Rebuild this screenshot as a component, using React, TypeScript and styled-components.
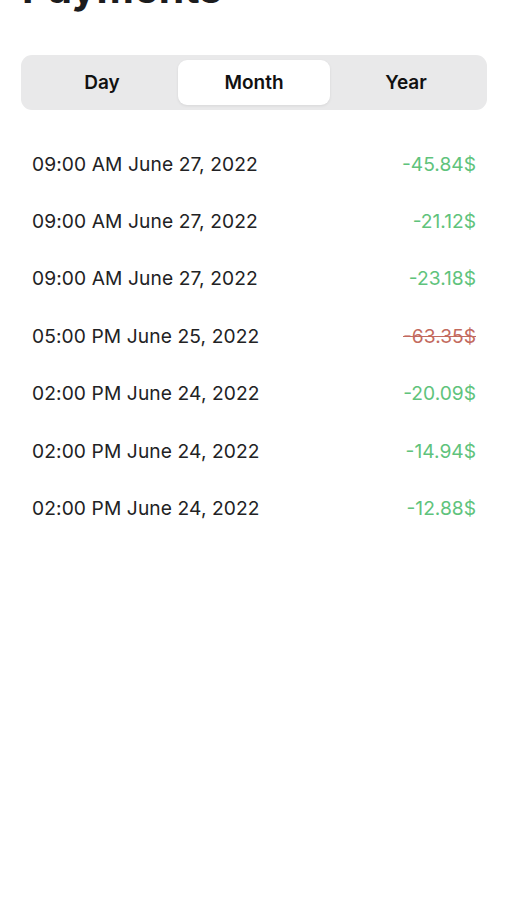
import * as React from 'react';
import styled, { createGlobalStyle, css } from 'styled-components';

const GlobalStyle = createGlobalStyle`
  html, body {
    margin: 0;
    padding: 0;
    background: #ffffff;
    font-family: Inter, 'Noto Sans', 'Liberation Sans', sans-serif;
    color: #1c1c1e;
  }
`;

const Screen = styled.div`
  width: 507px;
  height: 900px;
  overflow: hidden;
  padding: 0 20px 0 21px;
  box-sizing: border-box;
`;

const Title = styled.h1`
  margin: -37px 0 0 1px;
  font-size: 41px;
  line-height: 50px;
  font-weight: 700;
  letter-spacing: 0.2px;
`;

const Segmented = styled.div`
  margin-top: 42px;
  height: 55px;
  padding: 5px;
  box-sizing: border-box;
  display: grid;
  grid-template-columns: repeat(3, 1fr);
  background: #e9e9ea;
  border-radius: 11px;
`;

const Segment = styled.div<{ active?: boolean }>`
  display: flex;
  align-items: center;
  justify-content: center;
  padding-bottom: 1px;
  font-size: 19px;
  font-weight: 600;
  color: #111;
  border-radius: 9px;
  ${({ active }) =>
    active &&
    css`
      background: #ffffff;
      box-shadow: 0 1px 3px rgba(0, 0, 0, 0.08);
    `};
`;

const List = styled.div`
  margin-top: 25px;
  padding: 0 11px;
  display: flex;
  flex-direction: column;
`;

const Row = styled.div`
  height: 57.4px;
  display: flex;
  align-items: center;
  justify-content: space-between;
  font-size: 19.2px;
`;

const DateText = styled.span`
  color: #222224;
  letter-spacing: 0.1px;
`;

const Amount = styled.span<{ cancelled?: boolean }>`
  color: #5fc37c;
  ${({ cancelled }) =>
    cancelled &&
    css`
      color: #c36a5e;
      text-decoration: line-through;
    `};
`;

interface Payment {
  date: string;
  amount: string;
  cancelled?: boolean;
}

const payments: Payment[] = [
  { date: '09:00 AM June 27, 2022', amount: '-45.84$' },
  { date: '09:00 AM June 27, 2022', amount: '-21.12$' },
  { date: '09:00 AM June 27, 2022', amount: '-23.18$' },
  { date: '05:00 PM June 25, 2022', amount: '-63.35$', cancelled: true },
  { date: '02:00 PM June 24, 2022', amount: '-20.09$' },
  { date: '02:00 PM June 24, 2022', amount: '-14.94$' },
  { date: '02:00 PM June 24, 2022', amount: '-12.88$' },
];

const periods = ['Day', 'Month', 'Year'];

export default function App() {
  const [period, setPeriod] = React.useState('Month');
  return (
    <>
      <GlobalStyle />
      <Screen>
        <Title>Payments</Title>
        <Segmented>
          {periods.map((p) => (
            <Segment key={p} active={p === period} onClick={() => setPeriod(p)}>
              {p}
            </Segment>
          ))}
        </Segmented>
        <List>
          {payments.map((payment, index) => (
            <Row key={index}>
              <DateText>{payment.date}</DateText>
              <Amount cancelled={payment.cancelled}>{payment.amount}</Amount>
            </Row>
          ))}
        </List>
      </Screen>
    </>
  );
}
